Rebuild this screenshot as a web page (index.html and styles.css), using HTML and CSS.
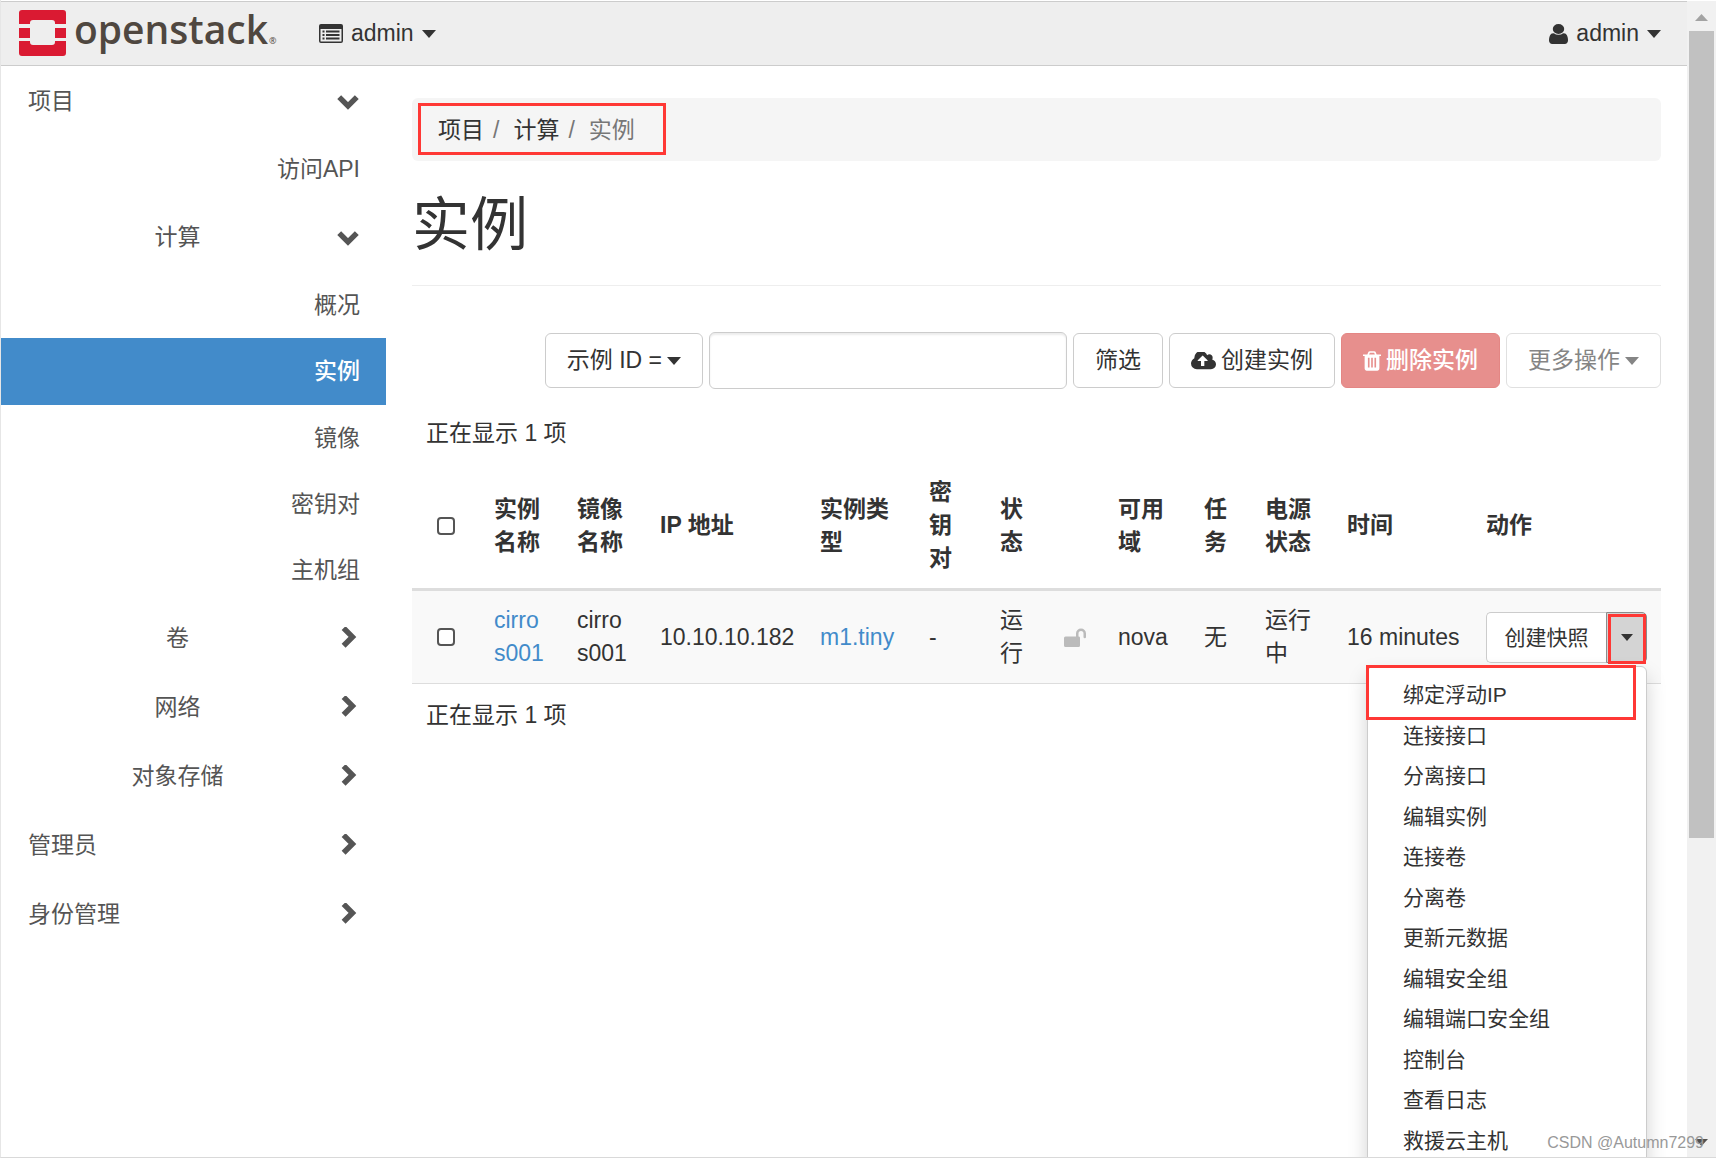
FILE: index.html
```html
<!DOCTYPE html>
<html lang="zh-CN">
<head>
<meta charset="utf-8">
<title>实例 - OpenStack Dashboard</title>
<link rel="stylesheet" href="styles.css">
</head>
<body>
<svg class="sprite" aria-hidden="true">
  <symbol id="i-down" viewBox="0 0 20 20"><path d="M2 6.500l8 8 8-8" fill="none" stroke="currentColor" stroke-width="5"/></symbol>
  <symbol id="i-right" viewBox="0 0 20 20"><path d="M6 1l8 8-8 8" fill="none" stroke="currentColor" stroke-width="5"/></symbol>
  <symbol id="i-caret" viewBox="0 0 14 8"><path d="M0 0h14L7 8z" fill="currentColor"/></symbol>
</svg>
<div class="app">
  <header class="topbar">
    <a class="brand" href="#" aria-label="openstack">
      <svg class="logo" viewBox="0 0 240 48" aria-hidden="true">
        <g fill="#da1a32">
          <path d="M3 0h41a3 3 0 0 1 3 3v11H36v-1a3 3 0 0 0-3-3H14a3 3 0 0 0-3 3v1H0V3a3 3 0 0 1 3-3z"/>
          <path d="M0 18h11v10H0zM36 18h11v10H36z"/>
          <path d="M0 31h11v1a3 3 0 0 0 3 3h19a3 3 0 0 0 3-3v-1h11v12a3 3 0 0 1-3 3H3a3 3 0 0 1-3-3z"/>
        </g>
        <text class="logo-text" x="55" y="34">openstack</text>
        <text class="logo-mark" x="250" y="34">®</text>
      </svg>
    </a>
    <button class="top-link" type="button">
      <svg class="icon-list" viewBox="0 0 24 19"><path fill="currentColor" fill-rule="evenodd" d="M2 0h20a2 2 0 0 1 2 2v15a2 2 0 0 1-2 2H2a2 2 0 0 1-2-2V2a2 2 0 0 1 2-2zM1.500 5v12q0 .5.500.5h20q.5 0 .5-.5V5zM3.500 6.500h2V8.500h-2zM7 6.500h13.500V8.500H7zM3.500 10h2v2h-2zM7 10h13.500v2H7zM3.500 13.500h2v2h-2zM7 13.500h13.500v2H7z"/></svg>
      <span>admin</span>
      <svg class="caret"><use href="#i-caret"/></svg>
    </button>
    <button class="top-link top-user" type="button">
      <svg class="icon-user" viewBox="256 128 1280 1536" preserveAspectRatio="none"><path fill="currentColor" d="M1536 1399q0 109-62.500 187t-150.500 78h-854q-88 0-150.500-78t-62.500-187q0-85 8.500-160.500t31.500-152 58.500-131 94-89 134.500-34.500q131 128 313 128t313-128q76 0 134.500 34.500t94 89 58.500 131 31.500 152 8.500 160.500zm-256-887q0 159-112.500 271.500t-271.500 112.500-271.500-112.500-112.500-271.500 112.500-271.500 271.500-112.500 271.500 112.500 112.500 271.500z"/></svg>
      <span>admin</span>
      <svg class="caret"><use href="#i-caret"/></svg>
    </button>
  </header>
  <div class="body">
    <nav class="sidebar">
      <button class="toggle" type="button"><span>项目</span><svg class="chev"><use href="#i-down"/></svg></button>
      <ul class="leaves"><li><a href="#">访问API</a></li></ul>
      <button class="toggle group" type="button"><span>计算</span><svg class="chev"><use href="#i-down"/></svg></button>
      <ul class="leaves">
        <li><a href="#">概况</a></li>
        <li><a class="active" href="#">实例</a></li>
        <li><a href="#">镜像</a></li>
        <li><a href="#">密钥对</a></li>
        <li><a href="#">主机组</a></li>
      </ul>
      <button class="toggle group" type="button"><span>卷</span><svg class="chev"><use href="#i-right"/></svg></button>
      <button class="toggle group" type="button"><span>网络</span><svg class="chev"><use href="#i-right"/></svg></button>
      <button class="toggle group" type="button"><span>对象存储</span><svg class="chev"><use href="#i-right"/></svg></button>
      <button class="toggle" type="button"><span>管理员</span><svg class="chev"><use href="#i-right"/></svg></button>
      <button class="toggle" type="button"><span>身份管理</span><svg class="chev"><use href="#i-right"/></svg></button>
    </nav>
    <main class="content">
      <ol class="breadcrumb">
        <li><a href="#">项目</a></li>
        <li><a href="#">计算</a></li>
        <li class="current">实例</li>
        <li class="mark mark-crumb" aria-hidden="true"></li>
      </ol>
      <h1>实例</h1>
      <div class="toolbar">
        <button class="btn" type="button">示例 ID = <svg class="caret"><use href="#i-caret"/></svg></button>
        <input class="filter" type="text" aria-label="筛选">
        <button class="btn" type="button">筛选</button>
        <button class="btn" type="button"><svg class="icon-cloud" viewBox="-64 256 1920 1280"><path fill="currentColor" d="M1216 864q0-14-9-23l-352-352q-9-9-23-9t-23 9l-351 351q-10 12-10 24 0 14 9 23t23 9h224v352q0 13 9.500 22.500t22.500 9.500h192q13 0 22.500-9.500t9.500-22.500v-352h224q13 0 22.500-9.500t9.500-22.500zm640 288q0 159-112.500 271.500t-271.500 112.500h-1088q-185 0-316.500-131.500t-131.500-316.500q0-130 70-240t188-165q-2-30-2-43 0-212 150-362t362-150q156 0 285.500 87t188.500 231q71-62 166-62 106 0 181 75t75 181q0 76-41 138 130 31 213.500 135.500t83.500 238.500z"/></svg>创建实例</button>
        <button class="btn danger" type="button" disabled><svg class="icon-trash" viewBox="192 128 1408 1536"><path fill="currentColor" d="M704 1376v-704q0-14-9-23t-23-9h-64q-14 0-23 9t-9 23v704q0 14 9 23t23 9h64q14 0 23-9t9-23zm256 0v-704q0-14-9-23t-23-9h-64q-14 0-23 9t-9 23v704q0 14 9 23t23 9h64q14 0 23-9t9-23zm256 0v-704q0-14-9-23t-23-9h-64q-14 0-23 9t-9 23v704q0 14 9 23t23 9h64q14 0 23-9t9-23zm-544-992h448l-48-117q-7-9-17-11h-317q-10 2-17 11zm928 32v64q0 14-9 23t-23 9h-96v948q0 83-47 143.500t-113 60.500h-832q-66 0-113-58.500t-47-141.500v-952h-96q-14 0-23-9t-9-23v-64q0-14 9-23t23-9h309l70-167q15-37 54-63t79-26h320q40 0 79 26t54 63l70 167h309q14 0 23 9t9 23z"/></svg>删除实例</button>
        <button class="btn muted" type="button" disabled>更多操作<svg class="caret"><use href="#i-caret"/></svg></button>
      </div>
      <p class="count">正在显示 1 项</p>
      <table class="grid">
        <colgroup>
          <col class="c-check"><col class="c-name"><col class="c-image"><col class="c-ip"><col class="c-type"><col class="c-key"><col class="c-status"><col class="c-lock"><col class="c-zone"><col class="c-task"><col class="c-power"><col class="c-time"><col class="c-action">
        </colgroup>
        <thead>
          <tr>
            <th><input class="tick" type="checkbox" aria-label="全选"></th>
            <th>实例名称</th><th>镜像名称</th><th>IP 地址</th><th>实例类型</th><th>密钥对</th><th>状态</th><th></th><th>可用域</th><th>任务</th><th>电源状态</th><th>时间</th><th>动作</th>
          </tr>
        </thead>
        <tbody>
          <tr>
            <td><input class="tick" type="checkbox" aria-label="cirros001"></td>
            <td><a href="#">cirro<wbr>s001</a></td>
            <td>cirro<wbr>s001</td>
            <td class="nowrap">10.10.10.182</td>
            <td><a href="#">m1.tiny</a></td>
            <td>-</td>
            <td>运行</td>
            <td class="lock-cell"><svg class="icon-lock" viewBox="0 0 22 19"><path d="M1.500 8.500H12V5.500a5 5 0 0 1 10 0V9a1 1 0 0 1-2.500 0V5.500a2.500 2.500 0 0 0-5 0v3h.2a1.300 1.300 0 0 1 1.300 1.300v7.700a1.500 1.500 0 0 1-1.500 1.500h-13A1.500 1.500 0 0 1 0 17.500V10a1.500 1.500 0 0 1 1.500-1.500z" fill="currentColor"/></svg></td>
            <td>nova</td>
            <td>无</td>
            <td>运行中</td>
            <td class="nowrap">16 minutes</td>
            <td>
              <div class="split">
                <button class="btn-sm" type="button">创建快照</button>
                <button class="btn-sm open" type="button" aria-label="更多" aria-expanded="true"><svg class="caret caret-sm"><use href="#i-caret"/></svg><span class="mark mark-toggle"></span></button>
                <ul class="menu">
                  <li><a href="#">绑定浮动IP</a></li>
                  <li><a href="#">连接接口</a></li>
                  <li><a href="#">分离接口</a></li>
                  <li><a href="#">编辑实例</a></li>
                  <li><a href="#">连接卷</a></li>
                  <li><a href="#">分离卷</a></li>
                  <li><a href="#">更新元数据</a></li>
                  <li><a href="#">编辑安全组</a></li>
                  <li><a href="#">编辑端口安全组</a></li>
                  <li><a href="#">控制台</a></li>
                  <li><a href="#">查看日志</a></li>
                  <li><a href="#">救援云主机</a></li>
                  <li class="mark mark-item" aria-hidden="true"></li>
                </ul>
              </div>
            </td>
          </tr>
        </tbody>
      </table>
      <p class="count count-foot">正在显示 1 项</p>
    </main>
  </div>
</div>
<div class="scrollbar" aria-hidden="true">
  <svg class="arrow" viewBox="0 0 13 7"><path d="M0 7h13L6.500 0z" fill="#a3a3a3"/></svg>
  <div class="thumb"></div>
  <div class="track"></div>
  <svg class="arrow arrow-end" viewBox="0 0 13 7"><path d="M0 0h13L6.500 7z" fill="#505050"/></svg>
</div>
<div class="watermark">CSDN @Autumn7299</div>
</body>
</html>
```
FILE: styles.css
```css
* { box-sizing: border-box; }

body {
  margin: 0;
  height: 100vh;
  display: flex;
  overflow: hidden;
  position: relative;
  padding-top: 1px;
  border-left: 1px solid #e6e6e6;
  border-bottom: 1px solid #d9d9d9;
  background: #fff;
  color: #333;
  font: 23px/33px "Liberation Sans", "Noto Sans CJK SC", sans-serif;
}

ul, ol { margin: 0; padding: 0; list-style: none; }
a { color: #428bca; text-decoration: none; }
button, input { font: inherit; color: inherit; margin: 0; }
button { cursor: pointer; }
svg { display: block; flex: none; }
.sprite { position: absolute; width: 0; height: 0; }

.app { flex: 1; min-width: 0; }

.caret { width: 14px; height: 8px; }
.caret-sm { width: 12px; height: 7px; }

/* Top bar */
.topbar {
  display: flex;
  align-items: center;
  height: 65px;
  padding: 0 26px 0 18px;
  background: #eee;
  border-top: 1px solid #ccc;
  border-bottom: 1px solid #ccc;
}
.logo { width: 240px; height: 48px; overflow: visible; }
.logo-text { font: 600 39px "Open Sans", sans-serif; fill: #4f4740; }
.logo-mark { font: 9px "Open Sans", sans-serif; fill: #4f4740; }
.top-link {
  display: flex;
  align-items: center;
  gap: 8px;
  padding: 0;
  margin-left: 60px;
  border: 0;
  background: none;
}
.top-user { margin-left: auto; }
.icon-list { width: 24px; height: 19px; }
.icon-user { width: 19px; height: 20px; }

.body { display: flex; align-items: flex-start; }

/* Side navigation */
.sidebar { width: 385px; flex: none; color: #555; }
.toggle {
  display: flex;
  align-items: center;
  gap: 10px;
  width: 100%;
  height: 69px;
  padding: 1px 27px 0;
  border: 0;
  background: none;
  text-align: left;
}
.toggle span { flex: 1; }
.group span { text-align: center; }
.chev { width: 22px; height: 22px; }
.leaves { padding-top: 1px; }
.leaves a {
  display: block;
  padding: 17px 26px 16px;
  color: #555;
  text-align: right;
}
.leaves .active { padding-bottom: 17px; background: #428bca; color: #fff; font-weight: 500; }

/* Page content */
.content { flex: 1; min-width: 0; padding: 32px 26px 0; }
.breadcrumb {
  position: relative;
  display: flex;
  padding: 16px 26px 14px;
  border-radius: 6px;
  background: #f5f5f5;
}
.breadcrumb a { color: #333; }
.breadcrumb .current { color: #777; }
.breadcrumb a::after { content: "/"; padding: 0 14px 0 9px; color: #777; }
h1 {
  margin: 0 0 46px;
  padding: 32px 0 28px;
  border-bottom: 1px solid #eee;
  font-size: 58px;
  line-height: 64px;
  font-weight: 400;
}
.toolbar { display: flex; justify-content: flex-end; align-items: center; gap: 6px; }
.btn {
  display: flex;
  align-items: center;
  gap: 5px;
  height: 55px;
  padding: 0 21px;
  border: 1px solid #ccc;
  border-radius: 6px;
  background: #fff;
  white-space: nowrap;
}
.filter {
  width: 358px;
  height: 57px;
  padding: 0 20px;
  border: 1px solid #ccc;
  border-radius: 6px;
  background: #fff;
  box-shadow: inset 0 2px 2px rgba(0, 0, 0, .08);
}
.danger { background: #e78f8d; border-color: #e48684; color: #fff; font-weight: 500; }
.muted { border-color: #e0e0e0; color: #858585; }
.icon-cloud { width: 25px; height: 18px; }
.icon-trash { width: 18px; height: 20px; }
.count { margin: 13px 0 0; padding: 15px 14px 14px; }
.count-foot { margin: 0; }

/* Instances table */
.grid { width: 100%; table-layout: fixed; border-collapse: separate; border-spacing: 0; }
.c-check { width: 69px; }
.c-name { width: 83px; }
.c-image { width: 83px; }
.c-ip { width: 160px; }
.c-type { width: 109px; }
.c-key { width: 71px; }
.c-status { width: 64px; }
.c-lock { width: 54px; }
.c-zone { width: 86px; }
.c-task { width: 61px; }
.c-power { width: 82px; }
.c-time { width: 139px; }
.c-action { width: 188px; }
th, td { padding: 13px; text-align: left; vertical-align: middle; }
th { padding-top: 12px; border-bottom: 3px solid #ddd; font-weight: 700; }
td { background: #f9f9f9; border-bottom: 1px solid #ddd; }
.nowrap { white-space: nowrap; }
.tick {
  appearance: none;
  display: block;
  width: 18px;
  height: 18px;
  margin-left: 12px;
  border: 2px solid #555;
  border-radius: 4px;
  background: #fff;
}
.lock-cell { padding-right: 0; }
.icon-lock { width: 22px; height: 19px; color: #bbb; }

.split { position: relative; display: flex; width: 161px; }
.btn-sm {
  height: 51px;
  flex: 1;
  padding: 0;
  border: 1px solid #ccc;
  border-right: 0;
  border-radius: 5px 0 0 5px;
  background: #fff;
  font-size: 21px;
  white-space: nowrap;
}
.open {
  position: relative;
  display: flex;
  flex: 0 0 41px;
  align-items: center;
  justify-content: center;
  border: 1px solid #8c8c8c;
  border-radius: 0 5px 5px 0;
  background: #d4d4d4;
}
.menu {
  position: absolute;
  top: 54px;
  right: 0;
  width: 280px;
  padding: 8px 0;
  border: 1px solid #ccc;
  border-radius: 6px;
  background: #fff;
  box-shadow: 0 10px 20px rgba(0, 0, 0, .18);
}
.menu a { display: block; padding: 0 35px; color: #333; font-size: 21px; line-height: 40px; }
.menu li:nth-child(even) { margin-top: 1px; }

/* Red highlight frames */
.mark { position: absolute; border: 3px solid #ff3835; pointer-events: none; }
.mark-crumb { left: 6px; top: 5px; width: 248px; height: 52px; }
.mark-toggle { inset: 1px 0 -2px 1px; }
.mark-item { left: -2px; top: -2px; width: 270px; height: 55px; }

/* Scroll bar */
.scrollbar {
  display: flex;
  flex-direction: column;
  align-items: center;
  width: 29px;
  padding: 13px 2px 11px;
  background: #f1f1f1;
}
.arrow { width: 13px; height: 7px; }
.thumb { flex: 807; width: 25px; margin-top: 10px; background: #c1c1c1; }
.track { flex: 301; }

.watermark {
  position: absolute;
  right: 12px;
  bottom: 4px;
  color: #999;
  font-size: 16px;
  line-height: 20px;
}
```
